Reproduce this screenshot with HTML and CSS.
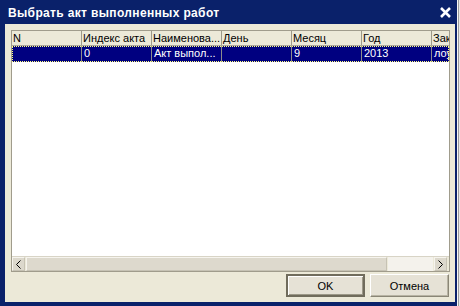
FILE: index.html
```html
<!DOCTYPE html>
<html lang="ru">
  <head>
    <meta charset="UTF-8" />
    <title>Выбрать акт выполненных работ</title>
    <link rel="stylesheet" href="styles.css">
  </head>
  <body>
    <div class="screen">
      <div class="dialog">
        <div class="titlebar">
          <span class="title">Выбрать акт выполненных работ</span>
          <svg class="close" width="13" height="11" viewBox="0 0 13 11">
            <path d="M2 1 L11 10 M11 1 L2 10" stroke="#fff" stroke-width="2.6" fill="none" />
          </svg>
        </div>
        <div class="body">
          <div class="grid">
            <div class="grid-head">
              <div class="cell">N</div>
              <div class="cell">Индекс акта</div>
              <div class="cell">Наименова...</div>
              <div class="cell">День</div>
              <div class="cell">Месяц</div>
              <div class="cell">Год</div>
              <div class="cell">Заказчик</div>
            </div>
            <div class="grid-row selected">
              <div class="cell"></div>
              <div class="cell">0</div>
              <div class="cell">Акт выпол...</div>
              <div class="cell"></div>
              <div class="cell">9</div>
              <div class="cell">2013</div>
              <div class="cell">лоу</div>
            </div>
            <div class="grid-empty"></div>
            <div class="hscroll">
              <div class="sb-btn">
                <svg width="7" height="9" viewBox="0 0 7 9"><path d="M5.5 0.5 L1.5 4.5 L5.5 8.5" stroke="#000" fill="none" /></svg>
              </div>
              <div class="sb-thumb"></div>
              <div class="sb-track"></div>
              <div class="sb-btn">
                <svg width="7" height="9" viewBox="0 0 7 9"><path d="M1.5 0.5 L5.5 4.5 L1.5 8.5" stroke="#000" fill="none" /></svg>
              </div>
            </div>
          </div>
          <div class="actions">
            <button class="btn btn-default">OK</button>
            <button class="btn">Отмена</button>
          </div>
        </div>
      </div>
      <div class="edge"></div>
    </div>
  </body>
</html>
```

FILE: styles.css
```css
:root {
  --frame: #0a216a;
  --face: #ece9d8;
  --line: #aca899;
  --select: #000080;
}
body {
  margin: 0;
  font-family: "Liberation Sans", Arial, sans-serif;
  font-size: 11px;
  background: #f2f1ec;
}
.screen {
  display: flex;
  width: 460px;
  height: 306px;
  overflow: hidden;
}
.dialog {
  width: 457px;
  height: 306px;
  box-sizing: border-box;
  background: var(--frame);
  border-left: 5px solid var(--frame);
  border-right: 2px solid var(--frame);
  border-bottom: 4px solid var(--frame);
  display: flex;
  flex-direction: column;
}
.edge {
  flex: 1;
  border-left: 1px solid #f7f7f7;
  box-shadow: inset 1px 0 0 #9c9c9c;
  background: #e6e6e6;
}
.titlebar {
  height: 24px;
  display: flex;
  align-items: center;
  justify-content: space-between;
  padding: 0 3px 0 3px;
  color: #fff;
}
.title {
  font-weight: bold;
  font-size: 12px;
  letter-spacing: 0.35px;
  padding-top: 1px;
}
.close {
  margin-top: 1px;
}
.body {
  flex: 1;
  background: var(--face);
  padding: 6px 5px 5px 6px;
  display: flex;
  flex-direction: column;
}
.grid {
  height: 242px;
  box-sizing: border-box;
  border: 1px solid #a09c8c;
  background: #fff;
  display: flex;
  flex-direction: column;
  overflow: hidden;
}
.grid-head,
.grid-row {
  display: flex;
  flex-shrink: 0;
}
.cell {
  flex: 0 0 70px;
  box-sizing: border-box;
  border-right: 1px solid var(--line);
  padding-left: 1px;
  white-space: nowrap;
  overflow: hidden;
}
.grid-head {
  height: 15px;
  line-height: 14px;
  background: var(--face);
  border-bottom: 1px solid var(--line);
  box-sizing: border-box;
  color: #000;
}
.grid-head .cell {
  border-right-color: #9d9a8a;
}
.grid-row {
  height: 16px;
  line-height: 15px;
}
.selected {
  background: var(--select);
  color: #fff;
  outline: 1px dotted #ffff80;
  outline-offset: -1px;
}
.selected .cell {
  border-right-color: #8c8c8c;
  padding-left: 2px;
}
.grid-empty {
  flex: 1;
}
.hscroll {
  height: 14px;
  display: flex;
  align-items: stretch;
  background: var(--face);
  border-top: 1px solid #d8d4c6;
  padding-right: 2px;
  gap: 1px;
}
.sb-btn {
  width: 13px;
  box-sizing: border-box;
  background: #dcd8cc;
  border: 1px solid #f6f4ee;
  border-right-color: #c6c2b4;
  border-bottom-color: #c6c2b4;
  display: flex;
  align-items: center;
  justify-content: center;
}
.sb-thumb {
  width: 361px;
  box-sizing: border-box;
  background: #ddd9cd;
  border: 1px solid #f6f4ee;
  border-right-color: #c6c2b4;
  border-bottom-color: #c6c2b4;
}
.sb-track {
  flex: 1;
  background: #f4f2ec;
}
.actions {
  display: flex;
  justify-content: flex-end;
  gap: 5px;
  margin-top: 2px;
  padding-right: 1px;
}
.btn {
  width: 79px;
  height: 23px;
  font-family: "Liberation Sans", Arial, sans-serif;
  font-size: 11px;
  color: #000;
  background: #e6e2d6;
  border: 1px solid #fff;
  border-right-color: #8a8676;
  border-bottom-color: #8a8676;
  box-shadow: inset -1px -1px 0 #b8b4a4;
  padding: 0;
}
.btn-default {
  border: 2px solid #706c5c;
  box-shadow: inset 1px 1px 0 #fff, inset -1px -1px 0 #9c9888;
}
```
